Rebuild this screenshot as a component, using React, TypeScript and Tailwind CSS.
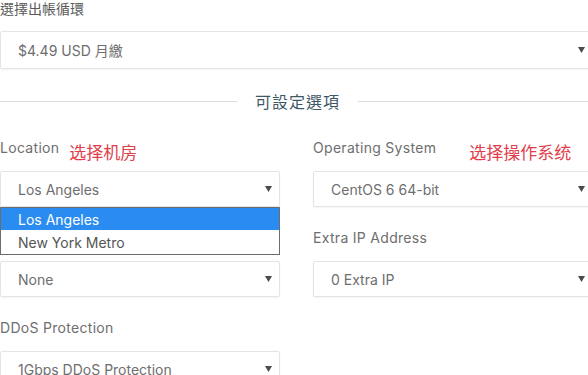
import { Fragment } from "react";

const latin = "font-['Inter','Noto_Sans_CJK_TC',sans-serif]";

function Arrow() {
  return (
    <svg width="7" height="6" viewBox="0 0 7 6" className="shrink-0">
      <polygon points="0,0 7,0 3.5,6" fill="#4b4b4b" />
    </svg>
  );
}

function SelectBox({ value, tall, children }: { value: string; tall?: boolean; children?: React.ReactNode }) {
  return (
    <div className="relative">
      <div
        className={`flex items-center justify-between pl-[17px] pr-[7px] bg-white border border-[#e4e4e4] rounded-[2px] shadow-[0_1px_2px_rgba(0,0,0,0.05)] ${
          tall ? "h-[38px]" : "h-[36px]"
        }`}
      >
        <span className="text-[14px] text-[#6e6e6e]">{value}</span>
        <Arrow />
      </div>
      {children}
    </div>
  );
}

function Field({
  label,
  note,
  noteGap,
  value,
  children,
}: {
  label: string;
  note?: string;
  noteGap?: string;
  value: string;
  children?: React.ReactNode;
}) {
  return (
    <div className="flex flex-col">
      <div className="flex items-end h-[20px] mb-[13px]">
        <span className="text-[14px] leading-[20px] text-[#6e6e6e] tracking-[0.3px]">{label}</span>
        {note && (
          <span
            className={`text-[17px] leading-[20px] translate-y-[4px] text-[#e03e4c] font-['Noto_Sans_CJK_SC',sans-serif] ${noteGap}`}
          >
            {note}
          </span>
        )}
      </div>
      <SelectBox value={value}>{children}</SelectBox>
    </div>
  );
}

export default function App() {
  return (
    <div className={`w-[588px] h-[375px] overflow-hidden bg-white ${latin}`}>
      <div className="w-[593px]">
        <p className="text-[14px] leading-[17px] text-[#5a5a5a] font-['Noto_Sans_CJK_TC',sans-serif]">
          選擇出帳循環
        </p>
        <div className="mt-[14px]">
          <SelectBox value="$4.49 USD 月繳" tall />
        </div>

        <div className="flex items-center mt-[21px] h-[22px]">
          <div className="w-[237px] h-px bg-[#dcdcdc]" />
          <span className="mx-auto text-[16px] text-[#3f5868] font-['Noto_Sans_CJK_TC',sans-serif] tracking-[1px]">
            可設定選項
          </span>
          <div className="w-[235px] h-px bg-[#dcdcdc]" />
        </div>

        <div className="grid grid-cols-[280px_280px] gap-x-[33px] gap-y-[21px] mt-[26px]">
          <Field label="Location" note="选择机房" noteGap="ml-[10px]" value="Los Angeles">
            <div className="absolute left-0 top-full w-full z-10 bg-white border border-[#6d6d6d] text-[14px]">
              <div className="h-[22px] flex items-center pl-[17px] bg-[#2a8cf0] text-white">Los Angeles</div>
              <div className="h-[24px] flex items-center pl-[17px] text-[#555]">New York Metro</div>
            </div>
          </Field>
          <Field label="Operating System" note="选择操作系统" noteGap="ml-[33px]" value="CentOS 6 64-bit" />
          <Field label="" value="None" />
          <Field label="Extra IP Address" value="0 Extra IP" />
          <Field label="DDoS Protection" value="1Gbps DDoS Protection" />
        </div>
      </div>
    </div>
  );
}
